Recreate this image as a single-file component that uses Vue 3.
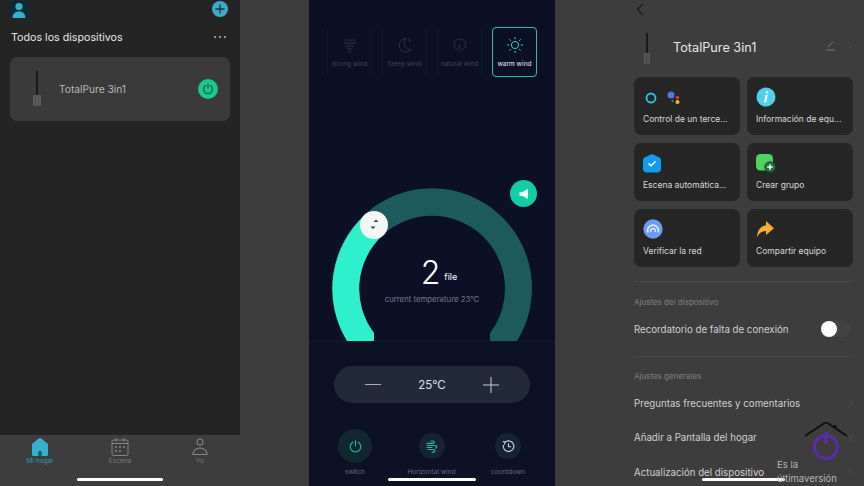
<script setup>
const modes = [
  { key: 'strong', label: 'strong wind' },
  { key: 'sleep', label: 'Sleep wind' },
  { key: 'natural', label: 'natural wind' },
  { key: 'warm', label: 'warm wind', active: true }
]
const cards = [
  { key: 'ctrl', label: 'Control de un terce...' },
  { key: 'info', label: 'Información de equ...' },
  { key: 'scene', label: 'Escena automática...' },
  { key: 'group', label: 'Crear grupo' },
  { key: 'net', label: 'Verificar la red' },
  { key: 'share', label: 'Compartir equipo' }
]
const general = ['Preguntas frecuentes y comentarios', 'Añadir a Pantalla del hogar', 'Actualización del dispositivo']
</script>

<template>
  <div class="screen">
    <section class="home">
      <header class="home-top">
        <svg class="avatar" width="20" height="20" viewBox="0 0 20 20">
          <circle cx="10" cy="10" r="10" fill="#0d2b36" />
          <circle cx="10" cy="7.5" r="3.600" fill="#2fb4cf" />
          <path d="M3.500 19c.3-4.500 3-6.500 6.500-6.500s6.200 2 6.500 6.500z" fill="#2fb4cf" />
        </svg>
        <svg width="16" height="16" viewBox="0 0 16 16">
          <circle cx="8" cy="8" r="8" fill="#3fa9c9" />
          <path d="M8 3.500v9M3.500 8h9" stroke="#17384a" stroke-width="1.300" />
        </svg>
      </header>
      <div class="home-title">
        <span>Todos los dispositivos</span>
        <span class="dots"><i></i><i></i><i></i></span>
      </div>
      <div class="device">
        <svg class="stick" width="10" height="36" viewBox="0 0 10 36">
          <rect x="4.300" y="0" width="1.400" height="24" fill="#0c0c0c" />
          <rect x="1" y="24" width="8" height="11" rx="1" fill="#5d5d5d" />
          <path d="M3.500 24v11M6.500 24v11" stroke="#444" stroke-width=".7" />
        </svg>
        <span class="device-name">TotalPure 3in1</span>
        <span class="device-power">
          <svg width="12" height="12" viewBox="0 0 12 12" fill="none" stroke="#0b5f49" stroke-width="1.200">
            <path d="M3.600 2.400a4.500 4.500 0 1 0 4.800 0M6 1v4" stroke-linecap="round" />
          </svg>
        </span>
      </div>
      <nav class="tabs">
        <div class="tab tab-on">
          <svg width="18" height="18" viewBox="0 0 18 18">
            <path d="M7.600 .6a2.200 2.200 0 0 1 2.800 0L17 6v10.500a1.500 1.500 0 0 1-1.500 1.500H2.500A1.500 1.500 0 0 1 1 16.500V6z" fill="#33b1cf" />
            <path d="M7.300 18v-3.500a1.700 1.700 0 0 1 3.400 0V18z" fill="#17586b" />
          </svg>
          <span>Mi hogar</span>
        </div>
        <div class="tab">
          <svg width="18" height="18" viewBox="0 0 18 18" fill="none" stroke="#858585" stroke-width="1">
            <rect x="1" y="2" width="16" height="15.500" rx="1.500" />
            <path d="M1 5.500h16M5 0v3.500M13 0v3.500" />
            <path d="M4 9h2M8 9h2M12 9h2M4 13h2M8 13h2" stroke-width="1.600" />
          </svg>
          <span>Escena</span>
        </div>
        <div class="tab">
          <svg width="16" height="18" viewBox="0 0 16 18" fill="none" stroke="#858585" stroke-width="1.100">
            <circle cx="8" cy="4" r="3" />
            <path d="M1 16.500c0-3.800 3-6.500 7-6.500s7 2.700 7 6.500z" />
          </svg>
          <span>Yo</span>
        </div>
        <i class="bar"></i>
      </nav>
    </section>

    <div class="gap"></div>

    <section class="fan">
      <div class="modes">
        <div v-for="m in modes" :key="m.key" class="mode" :class="{ 'mode-on': m.active }">
          <svg width="16" height="16" viewBox="0 0 16 16" fill="none" :stroke="m.active ? '#2fd2bd' : '#2b3346'" stroke-width="1">
            <path v-if="m.key === 'strong'" d="M3 3h10M2 6h12M4 9h8M5 12h6M6 15h3" />
            <path v-else-if="m.key === 'sleep'" d="M9 1.500a6.800 6.800 0 1 0 5.500 11 6.500 6.500 0 0 1-5.500-11zM12.500 2v2.500M11.300 3.200h2.400" />
            <path v-else-if="m.key === 'natural'" d="M8 2a5.500 5.500 0 0 0-2 10.700M8 2a5.500 5.500 0 0 1 2.500 10.400L8 15M7.500 7v5" />
            <template v-else>
              <circle cx="8" cy="8" r="3.600" />
              <path d="M8 0v2.200M8 13.800V16M0 8h2.200M13.800 8H16M2.300 2.300l1.600 1.600M12.100 12.100l1.600 1.600M13.700 2.300l-1.600 1.600M3.900 12.100l-1.600 1.600" />
            </template>
          </svg>
          <span>{{ m.label }}</span>
        </div>
      </div>

      <div class="dial">
        <svg class="dial-art" width="246" height="192" viewBox="0 0 246 192">
          <path d="M38 192A100 100 0 1 1 208 192H181V184A73 73 0 1 0 65 184V192Z" fill="#1d5a5d" />
          <path d="M38 192A100 100 0 0 1 56 66L74 86A73 73 0 0 0 65 184V192Z" fill="#2ff0cc" />
          <circle cx="65" cy="76" r="14" fill="#f4f6f6" />
          <path d="M64.500 73 67 70.500 69.500 73zM61.500 77.500h5L64 80z" fill="#3a3f44" />
        </svg>
        <span class="dial-speaker">
          <svg width="12" height="12" viewBox="0 0 12 12"><path d="M1.500 4h3L10 .8v10.400L4.500 8h-3z" fill="#eefcf8" /></svg>
        </span>
        <div class="dial-text">
          <div class="dial-value"><b>2</b><span>file</span></div>
          <div class="dial-temp">current temperature 23°C</div>
        </div>
      </div>

      <div class="controls">
        <div class="stepper">
          <i class="minus"></i>
          <span>25°C</span>
          <svg width="16" height="16" viewBox="0 0 16 16"><path d="M8 0v16M0 8h16" stroke="#c9ccd2" stroke-width="1" /></svg>
        </div>
        <div class="actions">
          <div class="action">
            <span class="circle big">
              <svg width="13" height="13" viewBox="0 0 13 13" fill="none" stroke="#1fbfa4" stroke-width="1.100" stroke-linecap="round">
                <path d="M3.700 2.200a5.300 5.300 0 1 0 5.600 0M6.500 .7v5" />
              </svg>
            </span>
            <label>switch</label>
          </div>
          <div class="action">
            <span class="circle">
              <svg width="12" height="13" viewBox="0 0 12 13" fill="none" stroke="#1fbfa4" stroke-width="1.100" stroke-linecap="round">
                <path d="M5 1h2a1.200 1.200 0 0 1 0 2.400H1M1 5.500h8.500a1.300 1.300 0 0 1 0 2.600M1 7.500h5M2 9.500h5.500a1.300 1.300 0 0 1 0 2.600H6" />
              </svg>
            </span>
            <label>Horizontal wind</label>
          </div>
          <div class="action">
            <span class="circle">
              <svg width="13" height="13" viewBox="0 0 13 13" fill="none" stroke="#d5dadd" stroke-width="1.100" stroke-linecap="round">
                <path d="M3 2.200A5.300 5.300 0 1 1 1.300 5.300M1.200 1.500l1.800.7-.4 1.900M6.500 3.800v3h2.200" />
              </svg>
            </span>
            <label>countdown</label>
          </div>
        </div>
        <i class="bar"></i>
      </div>
    </section>

    <div class="gap gap-wide"></div>

    <section class="settings">
      <svg class="back" width="8" height="13" viewBox="0 0 8 13" fill="none" stroke="#161616" stroke-width="1.100">
        <path d="M7 .8 1.500 6.500 7 12.200" />
      </svg>
      <div class="product">
        <svg width="10" height="31" viewBox="0 0 10 31">
          <rect x="4.300" y="0" width="1.400" height="21" fill="#0c0c0c" />
          <rect x="2" y="20" width="6" height="11" fill="#5a5a5a" />
          <path d="M4 21v10M6 21v10" stroke="#333" stroke-width=".7" />
        </svg>
        <span class="product-name">TotalPure 3in1</span>
        <svg class="edit" width="11" height="11" viewBox="0 0 11 11" fill="none" stroke="#777" stroke-width="1">
          <path d="M1 10h9M3 7l5-5" />
        </svg>
        <svg class="more" width="5" height="9" viewBox="0 0 5 9" fill="none" stroke="#484848" stroke-width="1"><path d="M.7.7 4.300 4.500.7 8.300" /></svg>
      </div>

      <div class="grid">
        <div v-for="c in cards" :key="c.key" class="card">
          <div class="card-icon">
            <template v-if="c.key === 'ctrl'">
              <svg width="38" height="16" viewBox="0 0 38 16">
                <circle cx="8" cy="9" r="4.500" fill="none" stroke="#2cc3e8" stroke-width="1.800" />
                <circle cx="28" cy="6" r="3.500" fill="#4f78e0" />
                <circle cx="34.500" cy="8.500" r="1.700" fill="#d8443a" />
                <circle cx="34.500" cy="13" r="2" fill="#f2bb1d" />
                <circle cx="29.500" cy="12" r="1" fill="#36a852" />
              </svg>
            </template>
            <template v-else-if="c.key === 'info'">
              <svg width="20" height="20" viewBox="0 0 20 20">
                <circle cx="10" cy="10" r="9.500" fill="#53cfe8" />
                <path d="M10.300 4.200h2.100l-.4 2.100H9.900zM9.500 7.700h2.200l-1.500 7.800H8z" fill="#f3fcfe" />
              </svg>
            </template>
            <template v-else-if="c.key === 'scene'">
              <svg width="18" height="19" viewBox="0 0 18 19">
                <path d="M7.800 .5a2.500 2.500 0 0 1 2.400 0L16 3.300A3 3 0 0 1 18 6v8.500a4 4 0 0 1-4 4H4a4 4 0 0 1-4-4V6a3 3 0 0 1 2-2.700z" fill="#149bf0" />
                <path d="M5.500 9.500 8 11.800l4.500-4.300" fill="none" stroke="#fff" stroke-width="1.500" />
              </svg>
            </template>
            <template v-else-if="c.key === 'group'">
              <svg width="20" height="19" viewBox="0 0 20 19">
                <rect x="0" y="0" width="17" height="16.500" rx="4.500" fill="#4fd35f" />
                <circle cx="14" cy="13" r="5.500" fill="#1f6d40" stroke="#262626" stroke-width=".5" />
                <path d="M14 10.200v5.600M11.200 13h5.600" stroke="#fff" stroke-width="1.500" />
              </svg>
            </template>
            <template v-else-if="c.key === 'net'">
              <svg width="20" height="20" viewBox="0 0 20 20" fill="none">
                <circle cx="10" cy="10" r="9.700" fill="#6a9cf2" />
                <path d="M4.800 13.500a5.500 5.500 0 1 1 10.400 0" stroke="#e3edff" stroke-width="1.700" />
                <path d="M7.700 13a2.500 2.500 0 1 1 4.600 0" stroke="#e3edff" stroke-width="1.500" />
              </svg>
            </template>
            <template v-else>
              <svg width="18" height="17" viewBox="0 0 18 17">
                <path d="M10 0 18 7.200 10 14V10C5.500 10 2.800 12 1 16.500 1 10.500 4 5 10 4.200z" fill="#f4ad35" />
              </svg>
            </template>
          </div>
          <span class="card-label">{{ c.label }}</span>
        </div>
      </div>

      <hr class="rule" />
      <p class="section">Ajustes del dispositivo</p>
      <div class="row row-switch">
        <span>Recordatorio de falta de conexión</span>
        <span class="toggle"><i></i></span>
      </div>
      <hr class="rule rule-tight" />
      <p class="section section-general">Ajustes generales</p>
      <div v-for="g in general" :key="g" class="row">
        <span>{{ g }}</span>
        <svg width="5" height="9" viewBox="0 0 5 9" fill="none" stroke="#505050" stroke-width="1"><path d="M.7.7 4.300 4.500.7 8.300" /></svg>
      </div>
      <i class="bar"></i>

      <div class="badge">
        <svg width="44" height="44" viewBox="0 0 44 44" fill="none">
          <path d="M1 14 22 0 43 14" stroke="#0d0d0d" stroke-width="1.800" />
          <path d="M31 6V3" stroke="#0d0d0d" stroke-width="2.500" />
          <circle cx="22" cy="25" r="11.500" stroke="#5c2ba8" stroke-width="3" />
          <path d="M22 10v12" stroke="#5c2ba8" stroke-width="3.500" />
        </svg>
        <span>Es la<br />últimaversión</span>
      </div>
    </section>
  </div>
</template>

<style>
html, body { margin: 0; background: #3d3d3d; }
</style>

<style scoped>
.screen {
  display: flex;
  width: 864px;
  height: 486px;
  overflow: hidden;
  background: #3d3d3d;
  font-family: Inter, "Noto Sans", "Liberation Sans", sans-serif;
}
.gap { width: 69px; flex: none; }
.gap-wide { width: 70px; }
.bar {
  position: absolute;
  bottom: 5px;
  width: 86px;
  height: 3px;
  border-radius: 2px;
  background: #fff;
}

/* Home column */
.home {
  position: relative;
  width: 240px;
  flex: none;
  display: flex;
  flex-direction: column;
  background: #242424;
}
.home-top {
  display: flex;
  justify-content: space-between;
  height: 18px;
  padding: 1px 12px 0 9px;
}
.avatar { margin-top: -2px; }
.home-title {
  display: flex;
  justify-content: space-between;
  align-items: center;
  height: 20px;
  margin-top: 8px;
  padding: 0 14px 0 11px;
  color: #e6e6e6;
  font-size: 10.700px;
  font-weight: 400;
}
.dots { display: flex; gap: 2.500px; }
.dots i { width: 2.500px; height: 2.500px; border-radius: 50%; background: #b8b8b8; }
.device {
  display: flex;
  align-items: center;
  height: 64px;
  margin: 10px 10px 0;
  padding: 0 12px 0 22px;
  border-radius: 7px;
  background: #3a3a3a;
}
.device-name { margin-left: 17px; flex: 1; color: #b9b9b9; font-size: 10.200px; }
.device-power {
  display: flex;
  align-items: center;
  justify-content: center;
  width: 20px;
  height: 20px;
  border-radius: 50%;
  background: #16c98f;
}
.tabs {
  position: relative;
  display: flex;
  justify-content: center;
  margin-top: auto;
  height: 51px;
  background: #3d3d3d;
}
.tab {
  width: 80px;
  display: flex;
  flex-direction: column;
  align-items: center;
  gap: 1px;
  padding-top: 3px;
  color: #7c7c7c;
  font-size: 6.500px;
}
.tab-on { color: #2d97b2; }
.tabs .bar { left: 77px; }

/* Fan column */
.fan {
  position: relative;
  width: 246px;
  flex: none;
  display: flex;
  flex-direction: column;
  background: #0b1027;
}
.modes {
  display: flex;
  gap: 10px;
  padding: 27px 18px 0;
}
.mode {
  width: 45px;
  height: 50px;
  box-sizing: border-box;
  display: flex;
  flex-direction: column;
  align-items: center;
  gap: 7px;
  padding-top: 9px;
  border-radius: 4px;
  border: 1px solid transparent;
  border-left-color: #121a30;
  border-right-color: #121a30;
  color: #3f4657;
  font-size: 6.500px;
  white-space: nowrap;
}
.mode-on {
  border-color: #2dbfae;
  color: #d6dae0;
  font-weight: 500;
}
.dial {
  position: relative;
  height: 264px;
}
.dial-art {
  position: absolute;
  left: 0;
  top: 72px;
}
.dial-speaker {
  position: absolute;
  top: 103px;
  left: 201px;
  width: 27px;
  height: 27px;
  display: flex;
  align-items: center;
  justify-content: center;
  border-radius: 50%;
  background: #12cfa3;
}
.dial-text {
  position: absolute;
  left: 0;
  right: 0;
  top: 177px;
  text-align: center;
}
.dial-value {
  display: flex;
  justify-content: center;
  align-items: center;
  gap: 4px;
  color: #fff;
  padding-left: 14px;
}
.dial-value b { font-size: 32px; line-height: 38px; font-weight: 300; }
.dial-value span { font-size: 9px; margin-top: 6px; }
.dial-temp { margin-top: 2px; color: #767a87; font-size: 7.800px; }
.controls {
  flex: 1;
  border-top: 1px solid #151b2f;
  background: #0c1126;
}
.stepper {
  display: flex;
  align-items: center;
  justify-content: space-between;
  height: 37px;
  margin: 24px 25px 0;
  padding: 0 31px;
  border-radius: 19px;
  background: #222939;
  color: #dfe2e6;
  font-size: 11.500px;
}
.minus { width: 16px; height: 1.300px; background: #a9adb5; }
.actions {
  display: flex;
  justify-content: space-between;
  align-items: center;
  margin-top: 25px;
  padding: 0 12px 0 11px;
}
.action {
  position: relative;
  width: 70px;
  height: 50px;
  display: flex;
  flex-direction: column;
  align-items: center;
  justify-content: flex-end;
}
.action label {
  position: absolute;
  left: 50%;
  top: 40px;
  transform: translateX(-50%);
  color: #666c78;
  font-size: 6.500px;
  white-space: nowrap;
}
.circle {
  position: absolute;
  top: 5px;
  width: 26px;
  height: 26px;
  display: flex;
  align-items: center;
  justify-content: center;
  border-radius: 50%;
  background: #152334;
}
.circle.big { top: 1px; width: 34px; height: 34px; background: #11272f; }
.fan .bar { left: 79px; width: 88px; }

/* Settings column */
.settings {
  position: relative;
  flex: 1;
  min-width: 0;
  box-sizing: border-box;
  padding: 3px 11px 0 9px;
  background: #3d3d3d;
}
.back { display: block; margin-left: 2px; }
.product {
  display: flex;
  align-items: center;
  height: 31px;
  margin-top: 17px;
  padding-left: 8px;
}
.product-name {
  flex: 1;
  margin: 0 0 3px 21px;
  color: #e6e6e6;
  font-size: 12.700px;
  font-weight: 400;
}
.edit { margin: 0 11px 6px 0; }
.more { margin: 0 1px 6px 0; }
.grid {
  display: grid;
  grid-template-columns: 106px 106px;
  grid-auto-rows: 58px;
  gap: 8px 7px;
  margin-top: 13px;
}
.card {
  display: flex;
  flex-direction: column;
  box-sizing: border-box;
  padding: 9px 0 0 9px;
  border-radius: 7px;
  background: #262626;
}
.card-icon { height: 22px; display: flex; align-items: center; }
.card-label { margin-top: 6px; color: #d8d8d8; font-size: 8.500px; white-space: nowrap; }
.rule { margin: 14px 0 0; border: 0; height: 1px; background: #4a4a4a; }
.rule-tight { margin-top: 0; }
.section { margin: 15px 0 0; color: #7f7f7f; font-size: 8px; line-height: 10px; }
.section-general { margin-top: 14px; }
.row {
  display: flex;
  justify-content: space-between;
  align-items: center;
  height: 34.500px;
  color: #d0d0d0;
  font-size: 9.700px;
}
.row-switch {
  box-sizing: border-box;
  height: 49px;
  padding-bottom: 5px;
}
.section-general + .row { margin-top: 5px; }
.toggle {
  position: relative;
  width: 30px;
  height: 16px;
  margin-right: 2px;
  border-radius: 8px;
  background: #434343;
}
.toggle i {
  position: absolute;
  left: 0;
  top: 0;
  width: 16px;
  height: 16px;
  border-radius: 50%;
  background: #fff;
}
.settings .bar { left: 77px; width: 83px; }
.badge {
  position: absolute;
  left: 152px;
  top: 422px;
  width: 64px;
  height: 64px;
  color: #b5b5b5;
  font-size: 9.500px;
  line-height: 14px;
}
.badge svg { position: absolute; left: 27px; top: 0; }
.badge span { position: absolute; top: 36px; white-space: nowrap; }
</style>
